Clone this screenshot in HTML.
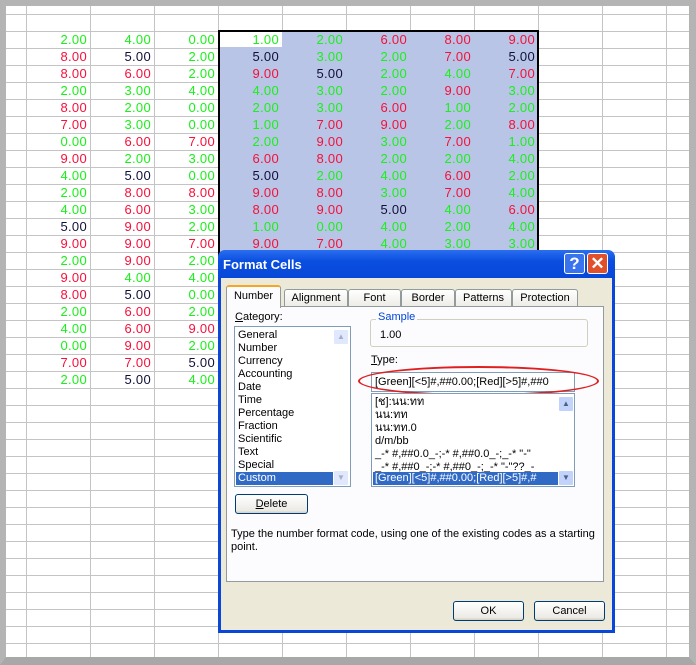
<!DOCTYPE html>
<html><head><meta charset="utf-8"><style>
*{margin:0;padding:0;box-sizing:border-box}
body{width:696px;height:665px;position:relative;overflow:hidden;background:#c0c0c0;font-family:"Liberation Sans",Arial,sans-serif}
#sheet{position:absolute;left:6px;top:6px;width:683px;height:651px;background-color:#fff;
background-image:linear-gradient(to bottom,#c4c4c4 1px,transparent 1px),linear-gradient(to right,#c4c4c4 1px,transparent 1px);
background-size:100% 17px,64px 100%;background-position:0 8px,20px 0}
#frame{position:absolute;left:0;top:0;width:696px;height:665px;border-left:6px solid #b4b4b4;border-top:6px solid #b4b4b4;border-right:7px solid #b4b4b4;border-bottom:8px solid #a8a8a8}
#sel{position:absolute;left:218px;top:30px;width:321px;height:230px;background:#b9c5e6;border:2px solid #000}
#selw{position:absolute;left:220px;top:32px;width:62px;height:15px;background:#fff}
.n{position:absolute;width:60px;text-align:right;font-size:13px;line-height:17px;letter-spacing:0.3px}
.g{color:#19f019}.r{color:#f5103a}.k{color:#10103a}
#dlg{position:absolute;left:218px;top:250px;width:397px;height:383px;background:#0a46d8;border-radius:8px 8px 0 0;padding:0 3px 3px 3px}
#tb{height:28px;color:#fff;font-size:13px;font-weight:bold;padding:7px 0 0 5px;background:linear-gradient(#2a6ef0,#0a4ee0 40%,#0848d8);border-radius:7px 7px 0 0;margin:0 -3px}
#body{position:absolute;left:3px;top:28px;right:3px;bottom:3px;background:#ece9d8;font-size:11px;color:#000}
.tbtn{position:absolute;top:3px;width:21px;height:21px;border:1px solid #fff;border-radius:3px;color:#fff;font-weight:bold;text-align:center;font-size:17px;line-height:19px}
.tab{position:absolute;top:11px;height:18px;border:1px solid #919b9c;border-bottom:none;background:linear-gradient(#fff,#ecebe5);border-radius:3px 3px 0 0;text-align:center;line-height:16px;font-size:11px}
#panel{position:absolute;left:5px;top:28px;width:378px;height:276px;border:1px solid #919b9c;background:#fcfcfe}
.box{position:absolute;background:#fff;border:1px solid #7f9db9}
.it{position:absolute;left:3px;font-size:11px;line-height:13px}
.btn{position:absolute;height:20px;border:1px solid #003c74;border-radius:3px;background:linear-gradient(#fff,#ecebe6 85%,#d6d0c5);text-align:center;font-size:11px;line-height:18px}
.sb{position:absolute;width:16px;height:16px;background:#c1d3fb;border:1px solid #fff;border-radius:2px;font-size:8px;color:#4d6185;text-align:center;line-height:14px}
</style></head><body>
<div id="sheet"></div>
<div id="sel"></div><div id="selw"></div>
<div id="nums"></div>
<div id="frame"></div>
<div id="dlg">
<div id="tb">Format Cells</div>
<div class="tbtn" style="left:346px;background:#3a73ee">?</div>
<div class="tbtn" style="left:369px;background:#e0502a">✕</div>
<div id="body">
<div class="tab" style="left:63px;width:64px">Alignment</div>
<div class="tab" style="left:127px;width:53px">Font</div>
<div class="tab" style="left:180px;width:54px">Border</div>
<div class="tab" style="left:234px;width:57px">Patterns</div>
<div class="tab" style="left:291px;width:66px">Protection</div>
<div id="panel">
<div style="position:absolute;left:8px;top:4px"><u>C</u>ategory:</div>
<div class="box" style="left:7px;top:19px;width:117px;height:161px">
<div class="it" style="top:2px">General</div><div class="it" style="top:15px">Number</div><div class="it" style="top:28px">Currency</div><div class="it" style="top:41px">Accounting</div><div class="it" style="top:54px">Date</div><div class="it" style="top:67px">Time</div><div class="it" style="top:80px">Percentage</div><div class="it" style="top:93px">Fraction</div><div class="it" style="top:106px">Scientific</div><div class="it" style="top:119px">Text</div><div class="it" style="top:132px">Special</div>
<div class="it" style="top:145px;left:1px;width:97px;background:#316ac5;color:#fff;padding-left:2px">Custom</div>
<div class="sb" style="left:98px;top:2px;opacity:.5">▲</div><div class="sb" style="left:98px;top:143px;opacity:.5">▼</div>
</div>
<div style="position:absolute;left:143px;top:12px;width:218px;height:28px;border:1px solid #d0d0bf;border-radius:3px"></div>
<div style="position:absolute;left:149px;top:4px;color:#0046d5;background:#fcfcfe;padding:0 2px">Sample</div>
<div style="position:absolute;left:153px;top:22px">1.00</div>
<div style="position:absolute;left:144px;top:47px"><u>T</u>ype:</div>
<div class="box" style="left:144px;top:65px;width:204px;height:20px;padding:3px 0 0 3px;white-space:nowrap;overflow:hidden">[Green][&lt;5]#,##0.00;[Red][&gt;5]#,##0</div>
<div style="position:absolute;left:131px;top:59px;width:241px;height:30px;border:2px solid #e02020;border-radius:50%"></div>
<div class="box" style="left:144px;top:86px;width:204px;height:94px;overflow:hidden;white-space:nowrap">
<div class="it" style="top:2px">[ช]:นน:ทท</div><div class="it" style="top:15px">นน:ทท</div><div class="it" style="top:28px">นน:ทท.0</div><div class="it" style="top:41px">d/m/bb</div><div class="it" style="top:54px">_-* #,##0.0_-;-* #,##0.0_-;_-* "-"</div><div class="it" style="top:67px">_-* #,##0_-;-* #,##0_-;_-* "-"??_-</div>
<div class="it" style="top:78px;left:1px;width:185px;background:#316ac5;color:#fff;padding-left:2px">[Green][&lt;5]#,##0.00;[Red][&gt;5]#,#</div>
<div class="sb" style="left:186px;top:2px">▲</div><div class="sb" style="left:186px;top:76px">▼</div>
</div>
<div class="btn" style="left:8px;top:187px;width:73px"><u>D</u>elete</div>
<div style="position:absolute;left:4px;top:221px;width:370px;line-height:13px">Type the number format code, using one of the existing codes as a starting point.</div>
</div>
<div class="tab" style="left:5px;top:7px;width:55px;height:23px;background:#fcfcfe;border-top:2px solid #f5a623;line-height:18px;z-index:2">Number</div>
<div class="btn" style="left:232px;top:323px;width:71px">OK</div>
<div class="btn" style="left:313px;top:323px;width:71px">Cancel</div>
</div></div>
<script>
var d=[
"g2 g4 g0 g1 g2 r6 r8 r9","r8 k5 g2 k5 g3 g2 r7 k5","r8 r6 g2 r9 k5 g2 g4 r7","g2 g3 g4 g4 g3 g2 r9 g3",
"r8 g2 g0 g2 g3 r6 g1 g2","r7 g3 g0 g1 r7 r9 g2 r8","g0 r6 r7 g2 r9 g3 r7 g1","r9 g2 g3 r6 r8 g2 g2 g4",
"g4 k5 g0 k5 g2 g4 r6 g2","g2 r8 r8 r9 r8 g3 r7 g4","g4 r6 g3 r8 r9 k5 g4 r6","k5 r9 g2 g1 g0 g4 g2 g4",
"r9 r9 r7 r9 r7 g4 g3 g3","g2 r9 g2","r9 g4 g4","r8 k5 g0","g2 r6 g2","g4 r6 r9","g0 r9 g2","r7 r7 k5","g2 k5 g4"];
var h="";d.forEach(function(r,i){r.split(" ").forEach(function(c,j){
h+='<div class="n '+c[0]+'" style="left:'+(90+64*j-63)+'px;top:'+(31+17*i)+'px">'+c[1]+'.00</div>';});});
document.getElementById("nums").innerHTML=h;
</script>
</body></html>
